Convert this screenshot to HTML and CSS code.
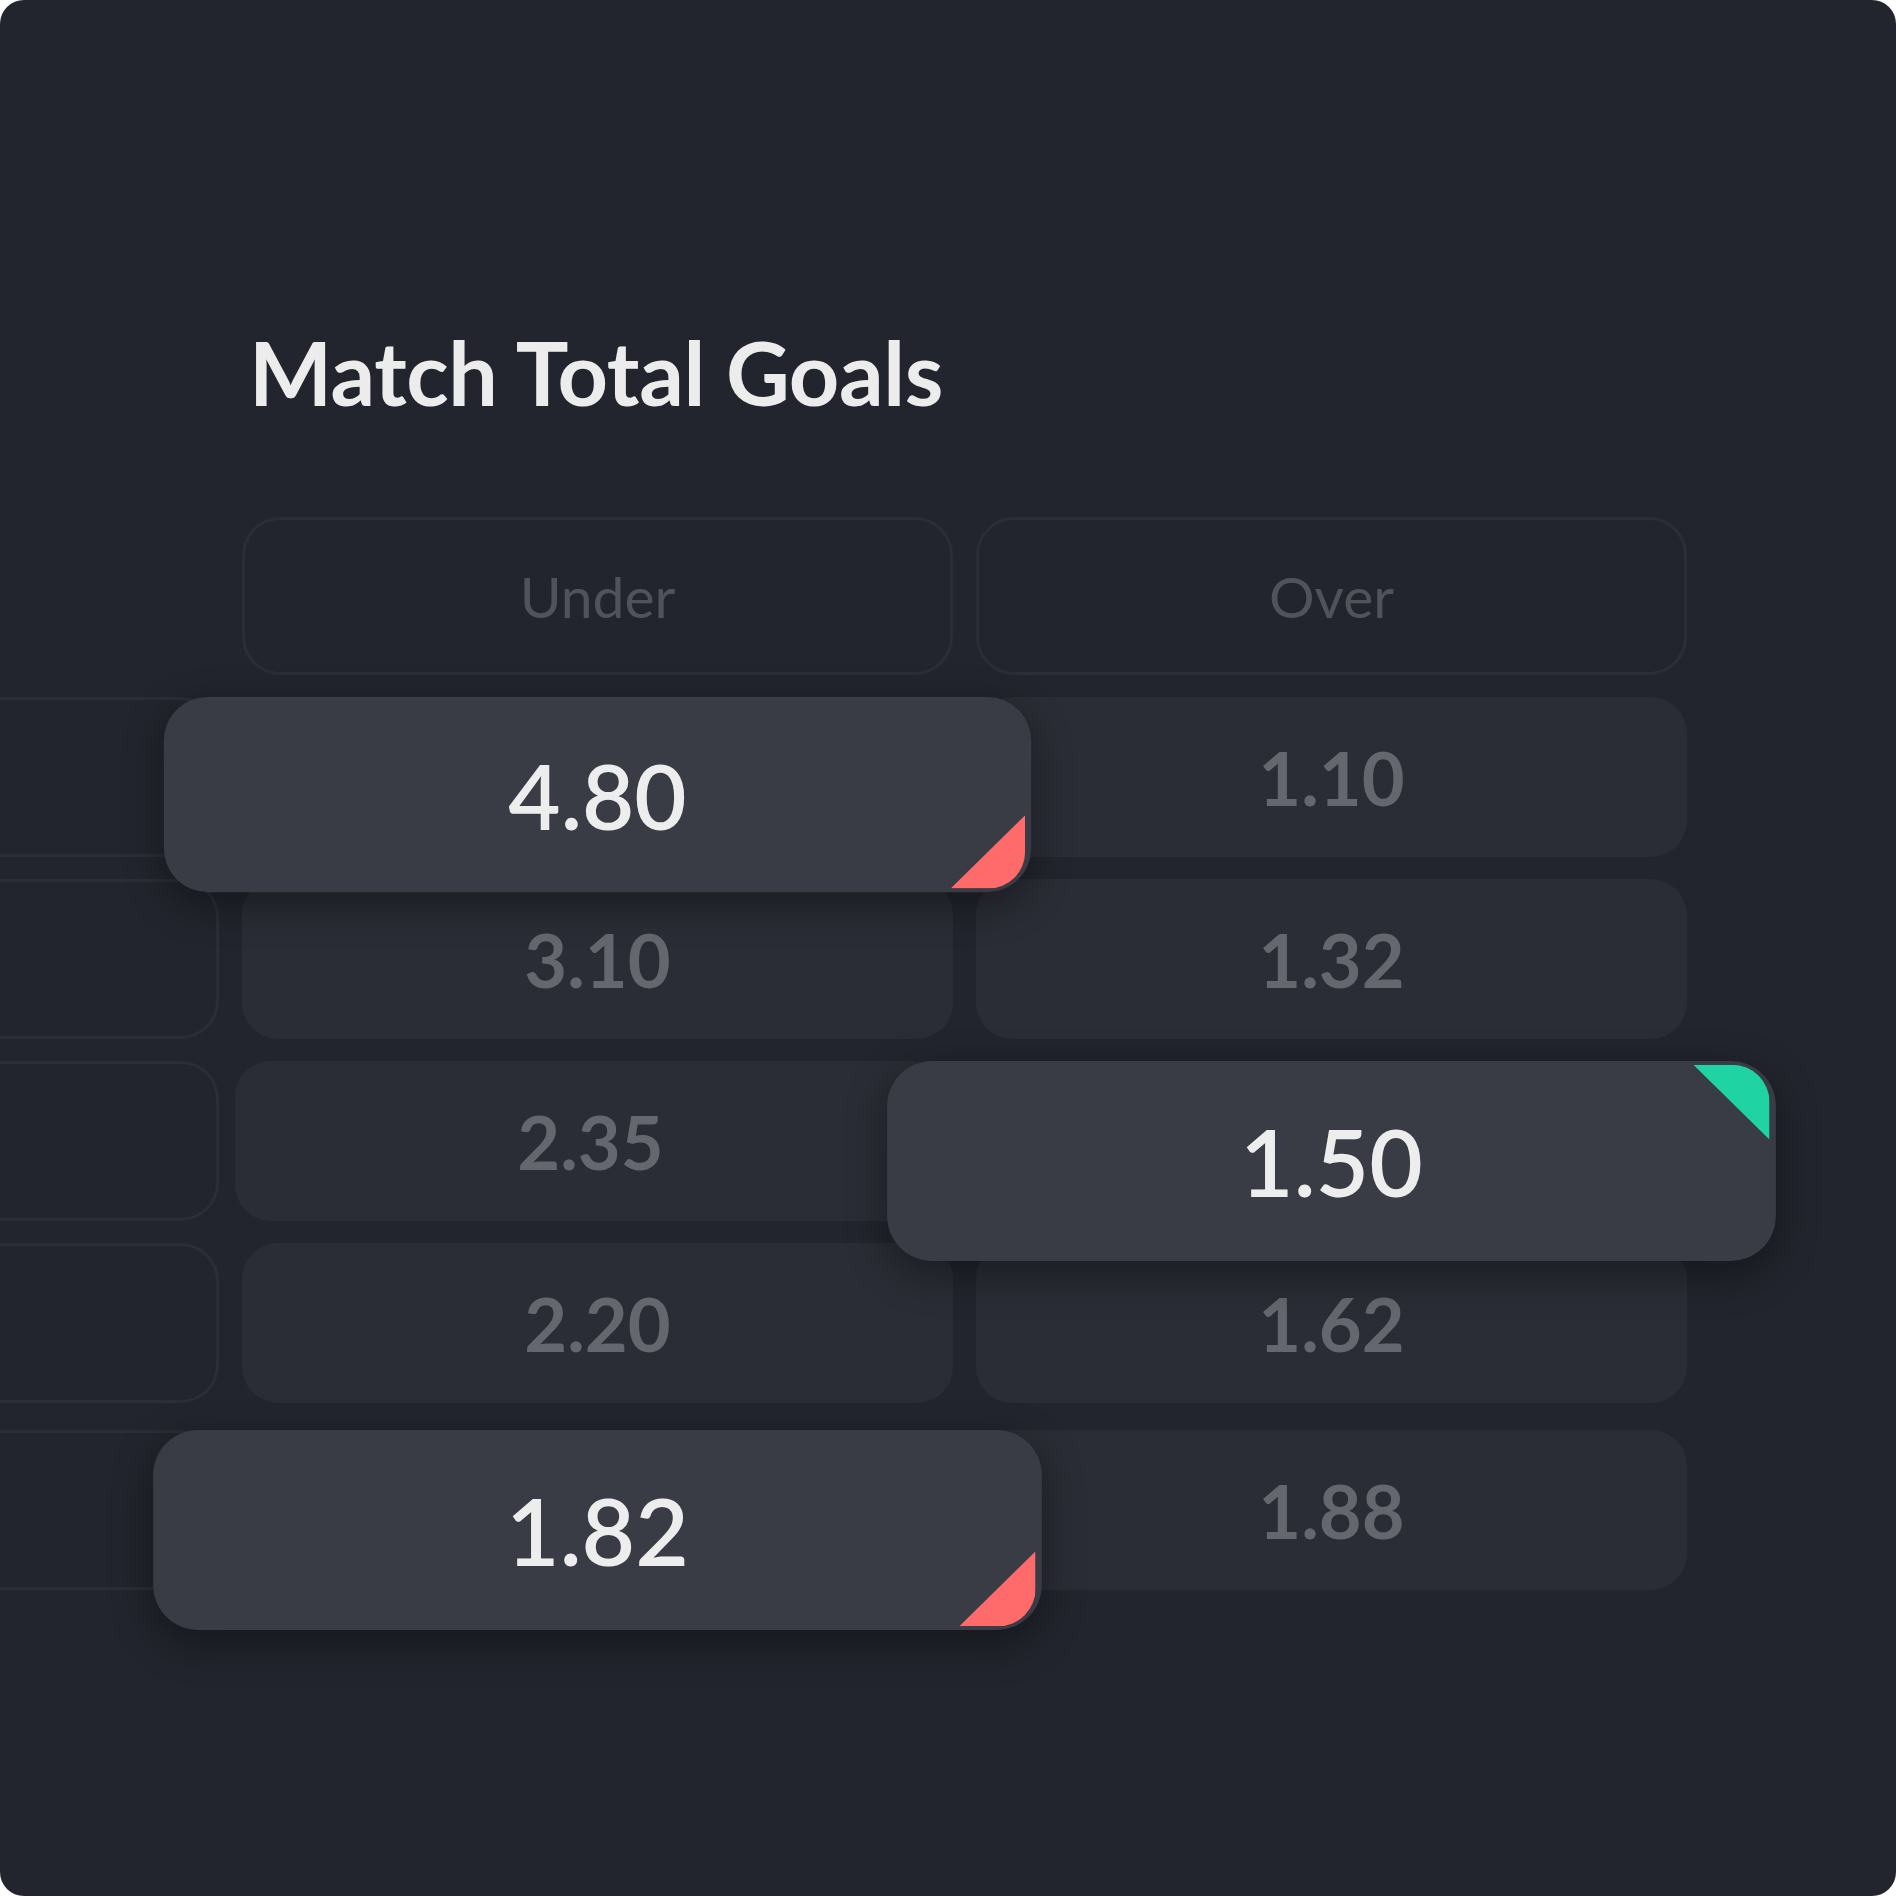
FILE: index.html
```html
<!DOCTYPE html>
<html lang="en">
<head>
<meta charset="utf-8">
<title>Match Total Goals</title>
<link rel="stylesheet" href="styles.css">
</head>
<body>
<div class="card">
  <h1 class="title">Match Total Goals</h1>
  <div class="market">
    <div class="spacer"></div>
    <div class="head">Under</div>
    <div class="head">Over</div>

    <div class="side"></div>
    <div class="odd hl down">4.80</div>
    <div class="odd">1.10</div>

    <div class="side"></div>
    <div class="odd">3.10</div>
    <div class="odd">1.32</div>

    <div class="side"></div>
    <div class="odd shift">2.35</div>
    <div class="odd hl big up">1.50</div>

    <div class="side"></div>
    <div class="odd">2.20</div>
    <div class="odd">1.62</div>

    <div class="side r5"></div>
    <div class="odd r5 hl big down">1.82</div>
    <div class="odd r5">1.88</div>
  </div>
</div>
</body>
</html>
```
FILE: styles.css
```css
html, body {
  margin: 0;
  padding: 0;
  background: #ffffff;
}

.card {
  width: 1896px;
  height: 1896px;
  box-sizing: border-box;
  background: #22252d;
  border-radius: 24px;
  overflow: hidden;
  padding-top: 328px;
  font-family: Lato, "Open Sans", sans-serif;
}

.title {
  margin: 0 0 0 249px;
  font-size: 88px;
  line-height: 88px;
  font-weight: 700;
  color: #ececec;
  letter-spacing: -0.4px;
}

.market {
  margin-top: 101px;
  display: grid;
  grid-template-columns: 219px 711px 711px;
  grid-template-rows: 158px 160px 160px 160px 160px 165px;
  column-gap: 23px;
  row-gap: 22px;
}

.side {
  box-sizing: border-box;
  border: 3px solid #2b2e36;
  border-left: none;
  border-radius: 0 38px 38px 0;
}

.head {
  box-sizing: border-box;
  border: 3px solid #2b2e36;
  border-radius: 38px;
  display: flex;
  align-items: center;
  justify-content: center;
  font-size: 57px;
  font-weight: 400;
  color: #50535a;
}

.odd {
  background: #2a2d35;
  border-radius: 36px;
  display: flex;
  align-items: center;
  justify-content: center;
  font-size: 74px;
  font-weight: 700;
  color: #64676d;
}

.shift {
  transform: translateX(-7px);
}

.r5 {
  align-self: end;
  height: 160px;
}

.hl {
  position: relative;
  z-index: 2;
  background: #393c45;
  color: #ededed;
  font-weight: 600;
  transform: scale(1.22);
  transform-origin: 50% 0;
  box-shadow: 0 10px 32px rgba(0, 0, 0, 0.38);
}

.hl.big {
  transform: scale(1.25);
}

.hl::after {
  content: "";
  position: absolute;
  width: 61px;
  height: 60px;
}

.down::after {
  right: 5px;
  bottom: 3px;
  background: #ff6a6a;
  border-bottom-right-radius: 30px;
  clip-path: polygon(100% 0, 100% 100%, 0 100%);
}

.up::after {
  right: 5px;
  top: 3px;
  background: #1fd3a3;
  border-top-right-radius: 30px;
  clip-path: polygon(0 0, 100% 0, 100% 100%);
}
```
